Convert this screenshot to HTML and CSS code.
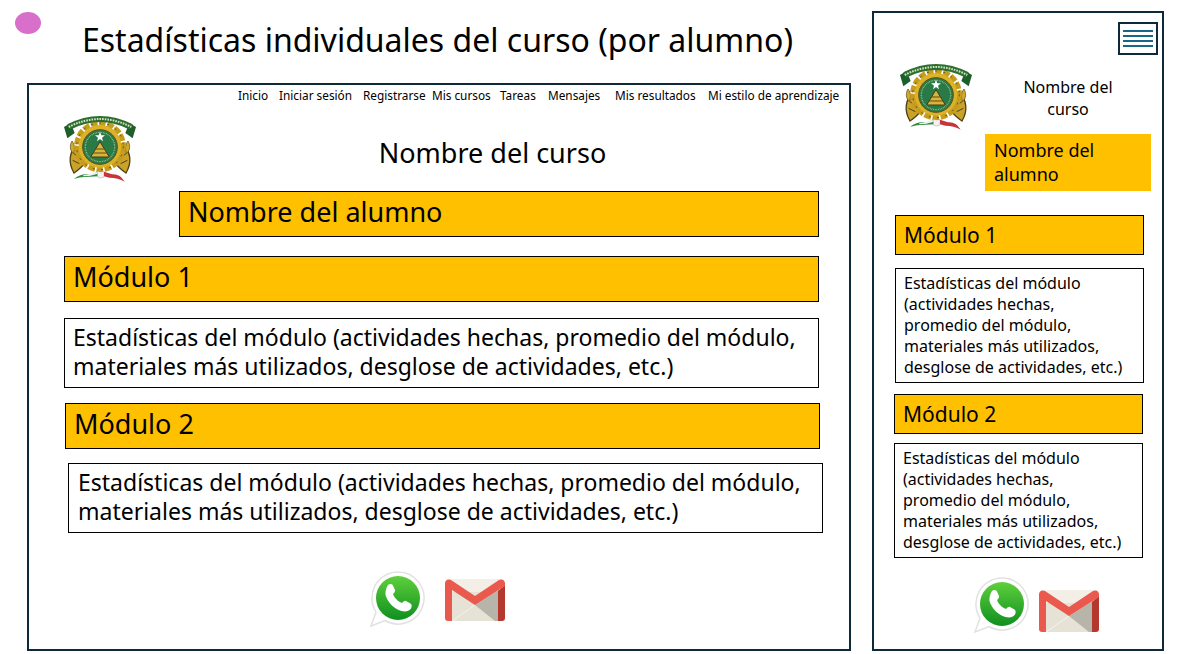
FILE: index.html
```html
<!DOCTYPE html>
<html lang="es">
<head>
  <meta charset="UTF-8">
  <title>Estadísticas individuales del curso</title>
  <link rel="stylesheet" href="styles.css">
</head>
<body>
  <!-- shared drawings -->
  <svg class="defs" aria-hidden="true">
    <defs>
      <linearGradient id="waGreen" x1="0" y1="0" x2="0" y2="1">
        <stop offset="0" stop-color="#5fd03c"/>
        <stop offset="1" stop-color="#0f8f1f"/>
      </linearGradient>
    </defs>
    <symbol id="crest" viewBox="42 38 216 196">
      <path d="M78 128c-20 16-24 50-6 80 14-10 26-20 34-32-2-20-12-38-28-48zM222 128c20 16 24 50 6 80-14-10-26-20-34-32 2-20 12-38 28-48z" fill="#c9a227" stroke="#4e4214" stroke-width="4"/>
      <path d="M72 150l16 12M68 170l20 10M228 150l-16 12M232 170l-20 10" stroke="#4e4214" stroke-width="3"/>
      <path d="M66 112c-8 14-6 28 4 38 6-14 4-28-4-38zM234 112c8 14 6 28-4 38-6-14-4-28 4-38z" fill="#d0ab2a" stroke="#4e4214" stroke-width="2"/>
      <circle cx="150" cy="128" r="70" fill="none" stroke="#c69c1e" stroke-width="16" stroke-dasharray="20 5"/>
      <circle cx="150" cy="128" r="64" fill="#dcb226"/>
      <circle cx="150" cy="128" r="70" fill="none" stroke="#5e4e18" stroke-width="3" stroke-dasharray="6 19"/>
      <circle cx="150" cy="130" r="52" fill="#2a7a47" stroke="#5e4e18" stroke-width="3"/>
      <circle cx="150" cy="130" r="44" fill="none" stroke="#a9cda0" stroke-width="4" stroke-dasharray="2 3"/>
      <path d="M150 84l4 11h11l-9 7 3 11-9-7-9 7 3-11-9-7h11z" fill="#fff"/>
      <path d="M150 114l28 46h-56z" fill="#d9b43a" stroke="#3e3e18" stroke-width="3"/>
      <path d="M138 136h24M130 148h40" stroke="#5c4c14" stroke-width="3"/>
      <path d="M42 70l20-12 12 30-22 16zM258 70l-20-12-12 30 22 16z" fill="#1d5f2a"/>
      <path d="M56 70Q150 22 244 70" fill="none" stroke="#2d6e2f" stroke-width="18"/>
      <path d="M56 70Q150 22 244 70" fill="none" stroke="#cfe0c0" stroke-width="6" stroke-dasharray="5 3"/>
      <path d="M72 226q22-18 52-14l20-8v14q-30 2-42 2t-30 6z" fill="#2f8a3c"/>
      <path d="M100 214q20-2 44-10v6q-24 8-44 8z" fill="#f2f2f2"/>
      <path d="M142 202q12 6 20 0v18q-10 6-20 0z" fill="#f2f2f2" stroke="#7a7a7a" stroke-width="1"/>
      <path d="M162 204l24 8q24-2 38 22-20-12-46-12l-16-4z" fill="#c8343a"/>
    </symbol>
    <symbol id="whatsapp" viewBox="0 0 56 60">
      <path d="M28 2a26 26 0 1 1-13 48.500L1 56l5-14A26 26 0 0 1 28 2z" fill="#fff" stroke="#e2e2e2" stroke-width="1.500"/>
      <circle cx="28" cy="28" r="22" fill="url(#waGreen)"/>
      <path d="M18 15c1.500-1.500 4-1.500 5 .5l2 4.500c.5 1-.5 2.500-2 4 1 3.500 5 7.500 9 9 1.500-1.500 3-2.500 4-2l4.500 2.500c1.500 1 1.500 3 .5 5-2 3-6 3.500-9.500 2.500-8-2.500-14-9-16-16-.5-4 1-7.500 2.500-10z" fill="#fff"/>
    </symbol>
    <symbol id="gmail" viewBox="0 0 60 44">
      <rect x="1" y="1" width="58" height="42" rx="3" fill="#f3efe6"/>
      <path d="M4 14h50v29H4z" fill="#e6e2d6"/>
      <path d="M30 27L54 12v31h-4z" fill="#b7b5aa"/>
      <path d="M7 43l23-16" stroke="#f6f3ec" stroke-width="1"/>
      <path d="M53 13l7-6v33a3 3 0 0 1-3 3h-4z" fill="#b5382e"/>
      <path d="M0 5a4 4 0 0 1 6-3l24 16L54 2a4 4 0 0 1 6 3v3L30 27 7 12v31H3a3 3 0 0 1-3-3z" fill="#e9594d"/>
    </symbol>
  </svg>

  <main class="slide">
    <div class="desktop-col">
      <header class="slide-head">
        <span class="dot"></span>
        <h1>Estadísticas individuales del curso (por alumno)</h1>
      </header>

      <section class="frame desktop">
        <nav class="nav">
          <a>Inicio</a>
          <a>Iniciar sesión</a>
          <a>Registrarse</a>
          <a>Mis cursos</a>
          <a>Tareas</a>
          <a>Mensajes</a>
          <a>Mis resultados</a>
          <a>Mi estilo de aprendizaje</a>
        </nav>
        <div class="course-row">
          <svg class="crest"><use href="#crest"/></svg>
          <h2>Nombre del curso</h2>
        </div>
        <div class="bar student">Nombre del alumno</div>
        <div class="bar mod1">Módulo 1</div>
        <div class="stats stats1">Estadísticas del módulo (actividades hechas, promedio del módulo, materiales más utilizados, desglose de actividades, etc.)</div>
        <div class="bar mod2">Módulo 2</div>
        <div class="stats stats2">Estadísticas del módulo (actividades hechas, promedio del módulo, materiales más utilizados, desglose de actividades, etc.)</div>
        <div class="contact">
          <svg class="wa"><use href="#whatsapp"/></svg>
          <svg class="gm"><use href="#gmail"/></svg>
        </div>
      </section>
    </div>

    <section class="frame phone">
      <div class="menu-icon"><span></span><span></span><span></span><span></span></div>
      <div class="phone-head">
        <svg class="crest"><use href="#crest"/></svg>
        <div class="phone-names">
          <h2>Nombre del curso</h2>
          <div class="student-tag">Nombre del alumno</div>
        </div>
      </div>
      <div class="bar p-mod1">Módulo 1</div>
      <div class="stats p-stats1">Estadísticas del módulo (actividades hechas, promedio del módulo, materiales más utilizados, desglose de actividades, etc.)</div>
      <div class="bar p-mod2">Módulo 2</div>
      <div class="stats p-stats2">Estadísticas del módulo (actividades hechas, promedio del módulo, materiales más utilizados, desglose de actividades, etc.)</div>
      <div class="contact p-contact">
        <svg class="wa"><use href="#whatsapp"/></svg>
        <svg class="gm"><use href="#gmail"/></svg>
      </div>
    </section>
  </main>
</body>
</html>
```

FILE: styles.css
```css
* {
  box-sizing: border-box;
}

body {
  margin: 0;
  background: #fff;
  color: #000;
  font-family: "Noto Sans", "Open Sans", sans-serif;
  overflow: hidden;
}

.defs {
  position: absolute;
  width: 0;
  height: 0;
}

.slide {
  display: flex;
  width: 1179px;
  height: 654px;
  padding: 11px 15px 3px 15px;
}

.desktop-col {
  display: flex;
  flex-direction: column;
  width: 836px;
  margin-right: 21px;
}

.slide-head {
  display: flex;
  height: 72px;
}

.dot {
  width: 26px;
  height: 22px;
  margin-top: 1px;
  border-radius: 50%;
  background: #d76fcb;
}

h1 {
  margin: 9px 0 0 41px;
  font-size: 32px;
  line-height: 40px;
  font-weight: 400;
  white-space: nowrap;
}

h2 {
  margin: 0;
  font-weight: 400;
}

.frame {
  border: 2px solid #0e2a3a;
  background: #fff;
}

.desktop {
  width: 824px;
  height: 568px;
  margin-left: 12px;
}

.nav {
  display: grid;
  grid-template-columns: 41px 84px 69px 68px 48px 67px 93px auto;
  height: 22px;
  padding-left: 209px;
  font-size: 11.800px;
  line-height: 20px;
  white-space: nowrap;
}

.course-row {
  display: flex;
  height: 84px;
  padding: 8px 0 0 35px;
}

.crest {
  width: 72px;
  height: 68px;
  flex: none;
}

.course-row h2 {
  flex: 1;
  padding-top: 20px;
  font-size: 27px;
  line-height: 36px;
  text-align: center;
}

.bar {
  display: flex;
  align-items: center;
  border: 1px solid #000;
  background: #ffc000;
  padding-left: 8px;
  white-space: nowrap;
}

.desktop .bar {
  height: 46px;
  padding-bottom: 5px;
  font-size: 27px;
}

.stats {
  border: 1px solid #000;
  background: #fff;
  padding-left: 8px;
}

.desktop .stats {
  width: 755px;
  height: 70px;
  font-size: 23px;
  line-height: 29px;
  padding-top: 4px;
}

.student {
  width: 640px;
  margin-left: 150px;
}

.mod1 {
  width: 755px;
  margin: 19px 0 0 35px;
}

.stats1 {
  margin: 16px 0 0 35px;
}

.mod2 {
  width: 755px;
  margin: 15px 0 0 36px;
}

.stats2 {
  margin: 14px 0 0 39px;
}

.stats2.stats {
  padding-left: 9px;
}

.contact {
  display: flex;
  align-items: flex-end;
  gap: 19px;
  margin: 37px 0 0 341px;
}

.wa {
  width: 56px;
  height: 60px;
  flex: none;
}

.gm {
  width: 60px;
  height: 44px;
  flex: none;
  margin-bottom: 8px;
}

.phone {
  width: 292px;
  height: 640px;
  display: flex;
  flex-direction: column;
}

.menu-icon {
  display: flex;
  flex-direction: column;
  justify-content: center;
  gap: 3px;
  width: 40px;
  height: 33px;
  margin: 9px 0 0 244px;
  padding: 0 3px;
  border: 2px solid #0e2a3a;
}

.menu-icon span {
  height: 2px;
  background: #1a6688;
}

.phone-head {
  display: flex;
  height: 160px;
  padding: 8px 0 0 26px;
}

.phone-names {
  display: flex;
  flex-direction: column;
  margin-left: 13px;
}

.phone-names h2 {
  width: 166px;
  padding: 13px 30px 0;
  font-size: 16px;
  line-height: 22px;
  text-align: center;
}

.student-tag {
  width: 166px;
  height: 57px;
  margin-top: 14px;
  padding: 4px 9px;
  background: #ffc000;
  font-size: 18px;
  line-height: 24px;
}

.phone .bar {
  width: 249px;
  height: 40px;
  padding-bottom: 1px;
  font-size: 21px;
}

.phone .stats {
  width: 249px;
  height: 115px;
  padding-top: 4px;
  padding-right: 14px;
  font-size: 16px;
  line-height: 21px;
}

.p-mod1,
.p-stats1 {
  margin-left: 21px;
}

.p-stats1 {
  margin-top: 13px;
}

.p-mod2 {
  margin: 11px 0 0 20px;
}

.p-stats2 {
  margin: 9px 0 0 20px;
}

.p-contact {
  gap: 9px;
  margin: 18px 0 0 100px;
}

.p-contact .gm {
  margin-bottom: 3px;
}
```
